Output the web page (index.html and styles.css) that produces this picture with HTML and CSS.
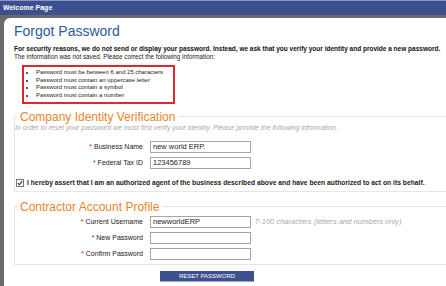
FILE: index.html
```html
<!DOCTYPE html>
<html lang="en">
<head>
    <meta charset="UTF-8">
    <title>Welcome Page</title>
    <link rel="stylesheet" href="styles.css">
</head>
<body>
    <div class="titlebar">Welcome Page</div>
    <div class="page">
        <h1>Forgot Password</h1>
        <p class="intro">For security reasons, we do not send or display your password. Instead, we ask that you verify your identity and provide a new password.</p>
        <p class="notice">The information was not saved. Please correct the following information:</p>

        <ul class="errors">
            <li>Password must be between 6 and 25 characters</li>
            <li>Password must contain an uppercase letter</li>
            <li>Password must contain a symbol</li>
            <li>Password must contain a number</li>
        </ul>

        <fieldset class="group first">
            <legend>Company Identity Verification</legend>
            <p class="help">In order to reset your password we must first verify your identity. Please provide the following information.</p>
            <div class="row">
                <label><span class="req">*</span> Business Name</label>
                <input type="text" value="new world ERP.">
            </div>
            <div class="row">
                <label><span class="req">*</span> Federal Tax ID</label>
                <input type="text" value="123456789">
            </div>
            <label class="assert">
                <span class="check">
                    <svg width="6" height="6" viewBox="0 0 6 6"><path d="M0.8 3.1 L2.4 4.7 L5.3 1.2" fill="none" stroke="#333" stroke-width="1.1"/></svg>
                </span>
                <span>I hereby assert that I am an authorized agent of the business described above and have been authorized to act on its behalf.</span>
            </label>
        </fieldset>

        <fieldset class="group second">
            <legend>Contractor Account Profile</legend>
            <div class="row">
                <label><span class="req">*</span> Current Username</label>
                <input type="text" value="newworldERP">
                <span class="hint">7-100 characters (letters and numbers only)</span>
            </div>
            <div class="row">
                <label><span class="req">*</span> New Password</label>
                <input type="password">
            </div>
            <div class="row">
                <label><span class="req">*</span> Confirm Password</label>
                <input type="password">
            </div>
        </fieldset>

        <div class="actions">
            <button class="reset-btn">RESET PASSWORD</button>
        </div>
    </div>
</body>
</html>
```

FILE: styles.css
```css
html, body {
    height: 100%;
}

body {
    margin: 0;
    background: #6a6a6a;
    font-family: 'Liberation Sans', Arial, sans-serif;
    color: #222;
    overflow: hidden;
    display: flex;
    flex-direction: column;
}

.titlebar {
    height: 14px;
    line-height: 14px;
    background: #3c4f8e;
    border-top: 1px solid #8797c8;
    color: #fff;
    font-size: 7px;
    font-weight: bold;
    padding-left: 3px;
}

.page {
    flex: 1;
    margin: 3px 0 0 4px;
    background: #fff;
    border-top-left-radius: 6px;
    padding: 5px 0 0 10px;
    overflow: hidden;
}

h1 {
    margin: 0;
    font-weight: normal;
    font-size: 14px;
    line-height: 16px;
    color: #2c5a9c;
}

.intro {
    margin: 6px 0 0;
    font-size: 6.5px;
    line-height: 8px;
    font-weight: bold;
    color: #111;
    white-space: nowrap;
}

.notice {
    margin: 0;
    font-size: 6.3px;
    line-height: 8px;
    white-space: nowrap;
}

.errors {
    margin: 4px 0 0 8px;
    padding: 2px 0 2px 12px;
    width: 137px;
    border: 2px solid #e3262d;
    font-size: 5.95px;
    line-height: 7.7px;
    white-space: nowrap;
}

.group {
    margin: 0;
    padding: 0 0 4px;
    border: 1px solid #e6e6e6;
    width: 480px;
}

.first {
    margin-top: 6px;
}

.second {
    margin-top: 8px;
    padding-bottom: 4px;
}

.group legend {
    color: #e8862a;
    font-size: 12px;
    line-height: 14px;
    padding: 0 3px;
    margin-left: 2px;
}

.help {
    margin: 0;
    font-size: 6.95px;
    line-height: 8px;
    font-style: italic;
    color: #aaa;
    white-space: nowrap;
}

.row {
    display: flex;
    align-items: center;
    margin-top: 4px;
}

.first .row:first-of-type {
    margin-top: 9px;
}

.second .row:first-of-type {
    margin-top: 2px;
}

.row label {
    width: 128px;
    padding-right: 7px;
    text-align: right;
    font-size: 7px;
}

.req {
    color: #c8102e;
}

.row input {
    box-sizing: border-box;
    width: 101px;
    height: 12px;
    padding: 0 2px;
    margin: 0;
    border: 1px solid #a6a6a6;
    font-family: 'Liberation Sans', Arial, sans-serif;
    font-size: 7.5px;
    color: #222;
}

.hint {
    margin-left: 4px;
    font-size: 7.55px;
    font-style: italic;
    color: #aaa;
    white-space: nowrap;
}

.assert {
    display: flex;
    align-items: center;
    gap: 3px;
    margin-top: 10px;
    font-size: 6.75px;
    line-height: 8px;
    font-weight: bold;
    white-space: nowrap;
}

.check {
    box-sizing: border-box;
    width: 8px;
    height: 8px;
    margin-left: 1px;
    border: 1px solid #777;
    background: #fff;
    display: flex;
    align-items: center;
    justify-content: center;
}

.actions {
    display: flex;
    padding: 6px 0 0 146px;
}

.reset-btn {
    width: 94px;
    height: 11px;
    padding: 0;
    background: #3c4f8e;
    border: none;
    border-bottom: 1px solid #9aa4c4;
    color: #fff;
    font-size: 6px;
    font-family: 'Liberation Sans', Arial, sans-serif;
}
```
